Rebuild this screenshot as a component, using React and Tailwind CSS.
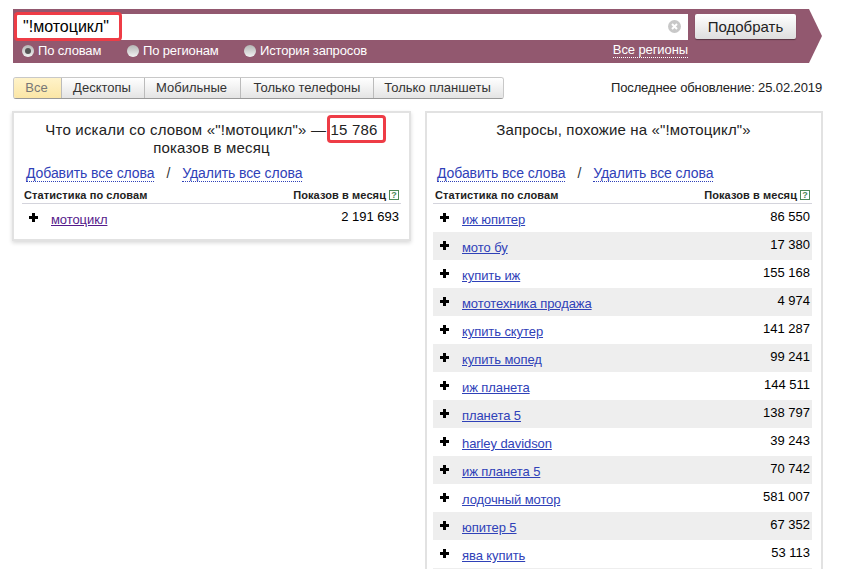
import React from "react";

const rows = [
  ["иж юпитер", "86 550"],
  ["мото бу", "17 380"],
  ["купить иж", "155 168"],
  ["мототехника продажа", "4 974"],
  ["купить скутер", "141 287"],
  ["купить мопед", "99 241"],
  ["иж планета", "144 511"],
  ["планета 5", "138 797"],
  ["harley davidson", "39 243"],
  ["иж планета 5", "70 742"],
  ["лодочный мотор", "581 007"],
  ["юпитер 5", "67 352"],
  ["ява купить", "53 113"],
];

const tabs = [
  ["Все", "w-[47px]"],
  ["Десктопы", "w-[83px] pr-[2px]"],
  ["Мобильные", "w-[96px] pr-[2px]"],
  ["Только телефоны", "w-[133px]"],
  ["Только планшеты", "w-[130px] pr-[2px]"],
];

function Radio({ checked, label, className }) {
  return (
    <div className={`flex items-center gap-[4px] ${className}`}>
      <span className="flex h-[12px] w-[12px] items-center justify-center rounded-full bg-gradient-to-b from-[#b5b5b5] to-[#f2f2f2]">
        {checked && <span className="h-[6px] w-[6px] rounded-full bg-[#555]" />}
      </span>
      <span className="tracking-[-0.15px]">{label}</span>
    </div>
  );
}

function Row({ word, count, visited, alt }) {
  return (
    <div className={`flex h-[28px] pr-[2px] ${alt ? "bg-[#eeeeee]" : ""}`}>
      <span className="relative mt-[9px] ml-[7px] h-[9px] w-[9px] shrink-0">
        <span className="absolute left-0 top-[3px] h-[3px] w-[9px] bg-black" />
        <span className="absolute left-[3px] top-0 h-[9px] w-[3px] bg-black" />
      </span>
      <a className={`ml-[13px] mt-[8px] text-[13px] leading-[16px] tracking-[-0.08px] underline ${visited ? "text-[#551a8b]" : "text-[#2f41b8]"}`}>{word}</a>
      <span className="ml-auto mt-[5px] text-[13px] leading-[16px] text-black">{count}</span>
    </div>
  );
}

function TableHead() {
  return (
    <div className="flex h-[18px] items-center border-b border-[#d4d4dc] px-[2px] pt-[1px] text-[11px] font-bold tracking-[0.1px] text-[#222]">
      <span>Статистика по словам</span>
      <span className="ml-auto">Показов в месяц</span>
      <span className="ml-[3px] flex h-[10px] w-[10px] items-center justify-center border border-[#4d8a5a] text-[9px] leading-none text-[#4d8a5a]">?</span>
    </div>
  );
}

function Actions({ className }) {
  return (
    <div className={`flex pl-[4px] text-[14px] leading-[16px] tracking-[-0.08px] text-[#2f41b8] ${className}`}>
      <a className="border-b border-dotted border-[#2f41b8]">Добавить все слова</a>
      <span className="mx-[12px] text-[#333]">/</span>
      <a className="border-b border-dotted border-[#2f41b8]">Удалить все слова</a>
    </div>
  );
}

export default function App() {
  return (
    <div className="relative h-[569px] w-[845px] overflow-hidden bg-white font-['Liberation_Sans',Arial,sans-serif] text-black">
      <div className="pl-[13px] pt-[9px]">
        <div className="relative flex h-[54px] w-[796px] bg-[#92586f]">
          <div className="absolute left-[796px] top-0 h-0 w-0 border-y-[27px] border-l-[13px] border-y-transparent border-l-[#92586f]" />
          <div className="pl-[3px] pt-[5px]">
            <div className="relative h-[26px] w-[672px] bg-white pl-[7px] text-[16px] leading-[26px]">
              "!мотоцикл"
              <svg className="absolute right-[7px] top-[6px] h-[13px] w-[13px]" viewBox="0 0 13 13">
                <circle cx="6.5" cy="6.5" r="6.5" fill="#c8c8c8" />
                <path d="M4 4l5 5M9 4l-5 5" stroke="#fff" strokeWidth="2" />
              </svg>
            </div>
            <div className="flex w-[672px] pl-[6px] pt-[3px] text-[13px] leading-[16px] text-white">
              <Radio checked label="По словам" className="w-[105px]" />
              <Radio label="По регионам" className="w-[117px]" />
              <Radio label="История запросов" />
              <a className="ml-auto h-[15px] whitespace-nowrap border-b border-dotted border-white leading-[14px] tracking-[-0.1px]">Все регионы</a>
            </div>
          </div>
          <button className="ml-[7px] mt-[5px] h-[25px] w-[101px] rounded-[2px] bg-gradient-to-b from-white to-[#dedede] text-[15px] leading-[25px] text-[#222] shadow-[0_1px_1px_rgba(0,0,0,0.4)]">Подобрать</button>
        </div>

        <div className="mt-[14px] flex h-[22px] w-[809px] items-center justify-between">
          <div className="flex h-[22px] overflow-hidden rounded-[3px] border border-[#c8c8c8] border-b-[#999] text-[13px] text-[#333]">
            {tabs.map(([label, w], i) => (
              <div
                key={label}
                className={`flex items-center justify-center ${w} ${i > 0 ? "border-l border-[#bbb] bg-gradient-to-b from-white to-[#e4e4e4]" : "bg-gradient-to-b from-[#fff3c9] to-[#fbe6a6] pr-[2px] text-[#777]"}`}
              >
                {label}
              </div>
            ))}
          </div>
          <span className="text-[13px] tracking-[-0.12px] text-[#222]">Последнее обновление: 25.02.2019</span>
        </div>

        <div className="-ml-[1px] mt-[12px] flex items-start gap-[14px]">
          <div className="h-[130px] w-[399px] border-2 border-[#e2e2e2] px-[8px] shadow-[0_2px_4px_rgba(0,0,0,0.15)]">
            <div className="pt-[8px] text-center text-[15px] leading-[18px] tracking-[0.2px] text-[#222]">
              <div>
                Что искали со словом «"!мотоцикл"» — <span className="relative">15 786<span className="absolute -left-[4px] -top-[6px] h-[28px] w-[59px] rounded-[4px] border-[3px] border-[#ee3c46]" /></span>
              </div>
              <div>показов в месяц</div>
            </div>
            <Actions className="mt-[8px]" />
            <div className="mt-[4px]">
              <TableHead />
              <Row word="мотоцикл" count="2 191 693" visited />
            </div>
          </div>

          <div className="h-[500px] w-[398px] border-2 border-[#e2e2e2] pl-[6px] pr-[9px]">
            <div className="pt-[8px] pl-[2px] text-center text-[15px] leading-[18px] tracking-[0.15px] text-[#222]">Запросы, похожие на «"!мотоцикл"»</div>
            <Actions className="mt-[26px]" />
            <div className="mt-[4px]">
              <TableHead />
              {rows.map(([word, count], i) => (
                <Row key={word} word={word} count={count} alt={i % 2 === 1} />
              ))}
              <div className="h-[28px] bg-[#eeeeee]" />
            </div>
          </div>
        </div>
      </div>

      <div className="pointer-events-none absolute left-[14px] top-[12px] h-[29px] w-[108px] rounded-[4px] border-[3px] border-[#ee3c46]" />
    </div>
  );
}
